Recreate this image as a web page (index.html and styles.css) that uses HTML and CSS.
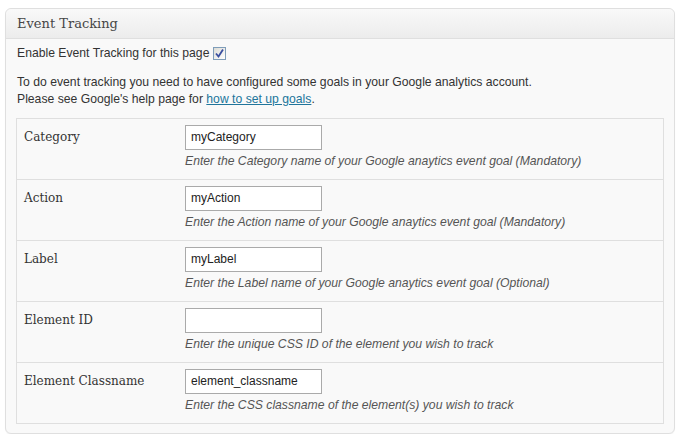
FILE: index.html
```html
<!DOCTYPE html>
<html>
<head>
<meta charset="utf-8">
<link rel="stylesheet" href="styles.css">
</head>
<body>
<div class="box">
  <div class="box-header"><h3 class="box-title">Event Tracking</h3></div>
  <div class="box-body">
    <p class="enable">Enable Event Tracking for this page <span class="check"><svg width="11" height="11" viewBox="0 0 11 11"><path d="M2 5.5 L4.5 8.5 L9 1.5" fill="none" stroke="#3a4fa0" stroke-width="1.8"/></svg></span></p>
    <p class="intro">To do event tracking you need to have configured some goals in your Google analytics account.<br>Please see Google's help page for <a href="#" class="link">how to set up goals</a>.</p>
    <div class="table">
      <div class="row">
        <div class="label">Category</div>
        <div class="field"><div class="input">myCategory</div><div class="desc">Enter the Category name of your Google anaytics event goal (Mandatory)</div></div>
      </div>
      <div class="row">
        <div class="label">Action</div>
        <div class="field"><div class="input">myAction</div><div class="desc">Enter the Action name of your Google anaytics event goal (Mandatory)</div></div>
      </div>
      <div class="row">
        <div class="label">Label</div>
        <div class="field"><div class="input">myLabel</div><div class="desc">Enter the Label name of your Google anaytics event goal (Optional)</div></div>
      </div>
      <div class="row">
        <div class="label">Element ID</div>
        <div class="field"><div class="input"></div><div class="desc">Enter the unique CSS ID of the element you wish to track</div></div>
      </div>
      <div class="row">
        <div class="label">Element Classname</div>
        <div class="field"><div class="input">element_classname</div><div class="desc">Enter the CSS classname of the element(s) you wish to track</div></div>
      </div>
    </div>
  </div>
</div>
</body>
</html>
```
FILE: styles.css
```css
html, body { margin: 0; padding: 0; background: #ffffff; }
body { font-family: "Liberation Sans", Arial, sans-serif; font-size: 12.2px; color: #333333; }
.box {
  margin: 8px 0 0 5px;
  width: 668px;
  border: 1px solid #dfdfdf;
  border-radius: 6px;
  background: #f9f9f9;
  box-shadow: 0 1px 1px rgba(0,0,0,0.04);
}
.box-header {
  height: 29px;
  border-bottom: 1px solid #dfdfdf;
  border-radius: 6px 6px 0 0;
  background: linear-gradient(to bottom, #f9f9f9, #ececec);
  display: flex;
  align-items: center;
  padding-left: 11px;
}
.box-title {
  margin: 0;
  font-family: "DejaVu Serif", Georgia, serif;
  font-weight: normal;
  font-size: 13px;
  color: #464646;
}
.box-body { padding: 6px 10px 9px 10px; }
.enable { margin: 0; display: flex; align-items: center; line-height: 16px; padding-left: 1px; }
.check {
  display: inline-flex; align-items: center; justify-content: center;
  width: 11px; height: 11px; margin-left: 4px;
  border: 1px solid #7f9db9;
  background: linear-gradient(135deg, #dcdcd6, #ffffff);
}
.intro { margin: 13px 0 0 1px; line-height: 17px; }
.link { color: #21759b; text-decoration: underline; }
.table {
  margin-top: 10px;
  border: 1px solid #dfdfdf;
  background: #f9f9f9;
}
.row {
  display: flex;
  height: 60px;
  border-top: 1px solid #dfdfdf;
}
.row:first-child { border-top: none; height: 60px; }
.label {
  width: 161px;
  padding: 11px 0 0 7px;
  font-family: "DejaVu Serif", Georgia, serif;
  font-size: 12px;
  color: #333333;
}
.field { padding-top: 6px; }
.input {
  box-sizing: border-box;
  width: 137px;
  height: 25px;
  border: 1px solid #aaaaaa;
  background: #ffffff;
  padding: 0 5px;
  line-height: 23px;
  font-size: 12px;
  color: #222222;
}
.desc {
  margin-top: 3px;
  font-style: italic;
  color: #555555;
  line-height: 16px;
}
```
